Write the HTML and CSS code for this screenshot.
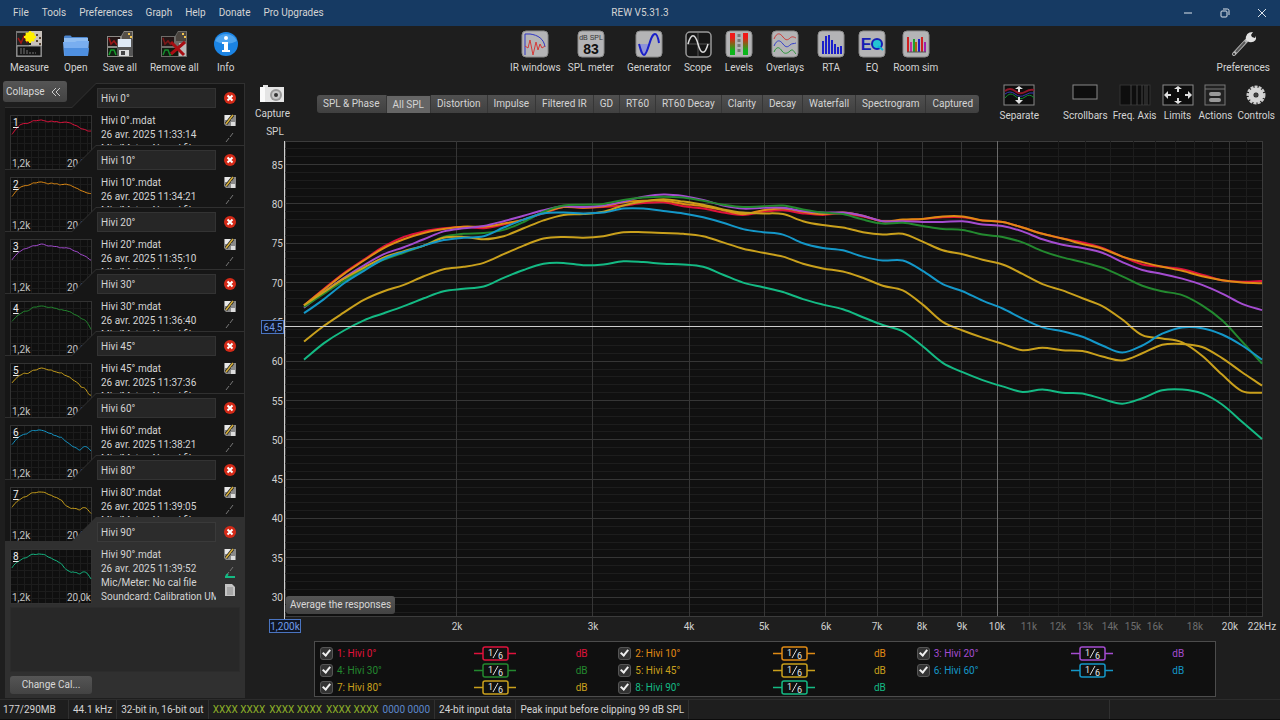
FILE: index.html
```
<!DOCTYPE html>
<html lang="en">
<head>
    <meta charset="UTF-8">
    <meta name="viewport" content="width=device-width, initial-scale=1.0">
    <title>REW V5.31.3</title>
    <link rel="stylesheet" href="styles.css">
</head>
<body>
    <!-- Title bar -->
    <header class="titlebar">
        <nav class="menu">
            <button>File</button>
            <button>Tools</button>
            <button>Preferences</button>
            <button>Graph</button>
            <button>Help</button>
            <button>Donate</button>
            <button>Pro Upgrades</button>
        </nav>
        <h1>REW V5.31.3</h1>
        <div class="window-buttons">
            <button aria-label="Minimize"><svg width="10" height="10" viewBox="0 0 10 10"><path d="M1 5h8"/></svg></button>
            <button aria-label="Restore"><svg width="10" height="10" viewBox="0 0 10 10"><rect x="1" y="3" width="6" height="6" rx="1"/><path d="M3 1h4.500q1.500 0 1.500 1.500V7"/></svg></button>
            <button aria-label="Close"><svg width="10" height="10" viewBox="0 0 10 10"><path d="M1 1l8 8M9 1l-8 8"/></svg></button>
        </div>
    </header>

    <!-- Toolbar -->
    <div class="toolbar">
        <div class="tools">
            <button class="tool">
                <svg width="28" height="28" viewBox="0 0 28 28">
                    <rect x="1" y="1" width="26" height="26" fill="#777"/>
                    <path d="M14 1h13v15H14z" fill="#c9c2bb"/>
                    <rect x="2" y="3" width="14" height="12" fill="#222"/>
                    <path d="M3 8l3 5 3-7 3 6 3-3" stroke="#a01515" stroke-width="1.500" fill="none"/>
                    <rect x="2" y="16" width="24" height="10" fill="#151515" stroke="#999"/>
                    <path d="M5 19h6M5 21h9M5 23h16" stroke="#777" stroke-dasharray="2 1"/>
                    <path d="M22 4v2M25 7v2M22 10v2M25 13v2" stroke="#543" stroke-width="2"/>
                    <circle cx="15" cy="7" r="5" fill="#fff000"/>
                    <path d="M15 1v12M9 7h12M11 3l8 8M19 3l-8 8" stroke="#fff000" stroke-width="2"/>
                </svg>
                Measure
            </button>
            <button class="tool">
                <svg width="28" height="28" viewBox="0 0 28 28">
                    <path d="M2 24V7q0-1.500 1.500-1.500h5L10 7h15q1 0 1 1.500V24z" fill="#4c86cf"/>
                    <path d="M2 8h24v4H2z" fill="#8fbdf2"/>
                    <path d="M1 12h12l2-1h12l-1 14q0 1-1 1H3q-1 0-1-1z" fill="#79aef0"/>
                    <path d="M2 18h25l-1 8H2.500z" fill="#4e8fe0"/>
                </svg>
                Open
            </button>
            <button class="tool">
                <svg width="28" height="28" viewBox="0 0 28 28">
                    <path d="M1 6h14l3-5h9v26H1z" fill="#8a8884"/>
                    <path d="M16 6l2-4h8v9H16z" fill="#555049"/>
                    <rect x="2" y="7" width="12" height="9" fill="#241616"/><rect x="2" y="18" width="12" height="8" fill="#112012"/>
                    <path d="M3 8l2 6 3-3 3 4" stroke="#9c1717" stroke-width="1.500" fill="none"/>
                    <path d="M3 25l2-5 3 0 2 5" stroke="#159a2b" stroke-width="1.500" fill="none"/>
                    <rect x="11" y="9" width="16" height="17" rx="1" fill="#565656"/>
                    <rect x="12" y="9" width="13" height="8" fill="#dfeaf6"/>
                    <rect x="13" y="20" width="10" height="6" fill="#ddd"/><rect x="15" y="21" width="4" height="4" fill="#444"/>
                    <path d="M22 4h2M24 7h2" stroke="#f0c34e" stroke-width="2"/>
                </svg>
                Save all
            </button>
            <button class="tool">
                <svg width="28" height="28" viewBox="0 0 28 28">
                    <path d="M1 6h14l3-5h9v26H1z" fill="#6e6c69"/>
                    <path d="M16 6l2-4h8v9H16z" fill="#4a443e"/>
                    <rect x="2" y="7" width="12" height="9" fill="#241616"/><rect x="2" y="18" width="16" height="8" fill="#101a10"/>
                    <path d="M3 8l2 6 3-3 3 4" stroke="#7c1717" stroke-width="1.500" fill="none"/>
                    <path d="M3 25l2-5 3 0 2 5 3-2" stroke="#158a2b" stroke-width="1.500" fill="none"/>
                    <path d="M19 13h7v13h-7z" fill="#bbb"/>
                    <path d="M11 12l13 13M25 12L11 24" stroke="#a80d12" stroke-width="3"/>
                    <path d="M22 4h2M24 7h2" stroke="#f0c34e" stroke-width="2"/>
                </svg>
                Remove all
            </button>
            <button class="tool">
                <svg width="28" height="28" viewBox="0 0 28 28">
                    <circle cx="14" cy="14" r="12" fill="#1b84e4"/>
                    <path d="M3 11a11.500 10 0 0 1 22 0q-11 6-22 0z" fill="#4da4f0"/>
                    <circle cx="14" cy="8" r="2" fill="#fff"/>
                    <path d="M10 12h6v8h2v2h-8v-2h2v-6h-2z" fill="#fff"/>
                </svg>
                Info
            </button>
        </div>

        <div class="tools tools-mid">
            <button class="tool tight">
                <svg width="28" height="28" viewBox="0 0 28 28">
                    <rect class="tile" x="1" y="1" width="26" height="26" rx="4"/>
                    <path d="M4 25V4h5c8 1 14 5 15 13" stroke="#2f35c4" fill="none"/>
                    <path d="M4 16l3 2 2-8 3 15 3-13 2 8 2-6 2 4 3-2" stroke="#d43a38" fill="none"/>
                </svg>
                IR windows
            </button>
            <button class="tool">
                <svg width="28" height="28" viewBox="0 0 28 28">
                    <rect class="tile" x="1" y="1" width="26" height="26" rx="4"/>
                    <text x="14" y="10" class="icon-small">dB SPL</text>
                    <text x="14" y="24" class="icon-big">83</text>
                </svg>
                SPL meter
            </button>
            <button class="tool">
                <svg width="28" height="28" viewBox="0 0 28 28">
                    <rect class="tile" x="1" y="1" width="26" height="26" rx="4"/>
                    <path d="M4 14h11c-2 6-4 11-6 11s-3-5-5-11z" fill="#8f93d8"/>
                    <path d="M4 14c2 7 3 11 5 11 4 0 6-21 11-21 2 0 3 3 4 9" stroke="#1a20c8" stroke-width="2" fill="none"/>
                </svg>
                Generator
            </button>
            <button class="tool">
                <svg width="28" height="28" viewBox="0 0 28 28">
                    <rect x="2" y="2" width="25" height="25" rx="4" fill="#161616" stroke="#999" stroke-width="1.500"/>
                    <path d="M14 3v23M3 14h23" stroke="#555"/>
                    <path d="M4 14c3-11 7-11 10 0s7 11 10 0" stroke="#ddd" stroke-width="1.500" fill="none"/>
                </svg>
                Scope
            </button>
            <button class="tool">
                <svg width="28" height="28" viewBox="0 0 28 28">
                    <defs>
                        <linearGradient id="meter" x2="0" y2="1"><stop offset=".2" stop-color="#f01818"/><stop offset=".8" stop-color="#0cb51c"/></linearGradient>
                    </defs>
                    <rect class="tile" x="1" y="1" width="26" height="26" rx="4"/>
                    <rect x="5" y="3" width="5" height="22" fill="url(#meter)"/><rect x="18" y="3" width="5" height="22" fill="url(#meter)"/>
                    <path d="M14 4v20" stroke="#777" stroke-width="3" stroke-dasharray="3 2"/>
                </svg>
                Levels
            </button>
            <button class="tool">
                <svg width="28" height="28" viewBox="0 0 28 28">
                    <rect class="tile" x="1" y="1" width="26" height="26" rx="4"/>
                    <g fill="none">
                        <path d="M3 9c3-7 6-6 9-2s5 3 7 1 4-1 6 0" stroke="#cf3a38"/>
                        <path d="M3 16c3-7 6-6 9-2s5 3 7 1 4-1 6-2" stroke="#3540c8"/>
                        <path d="M3 22c3-7 6-4 8-1s5 3 8 0 4 1 6 3" stroke="#2a9638"/>
                    </g>
                </svg>
                Overlays
            </button>
            <button class="tool">
                <svg width="28" height="28" viewBox="0 0 28 28">
                    <rect class="tile" x="1" y="1" width="26" height="26" rx="4"/>
                    <path d="M6 24V11M9 24V6M12 24V5M15 24V10M18 24V14M21 24V17M24 24V16" stroke="#1a1ecb" stroke-width="2"/>
                </svg>
                RTA
            </button>
            <button class="tool tight">
                <svg width="28" height="28" viewBox="0 0 28 28">
                    <rect class="tile" x="1" y="1" width="26" height="26" rx="4"/>
                    <circle cx="19" cy="14" r="5" fill="#25c5d2" stroke="#1620b4" stroke-width="2"/>
                    <path d="M20 16l5 4" stroke="#10b8d8" stroke-width="2"/>
                    <text x="8" y="20" class="icon-eq">E</text>
                </svg>
                EQ
            </button>
            <button class="tool">
                <svg width="28" height="28" viewBox="0 0 28 28">
                    <rect class="tile" x="1" y="1" width="26" height="26" rx="4"/>
                    <g stroke-width="2">
                        <path d="M6 22V7M20 22V7" stroke="#d02020"/><path d="M9 22V12" stroke="#c030a0"/>
                        <path d="M12 22V9" stroke="#1aa030"/><path d="M14 22V12" stroke="#b06010"/>
                        <path d="M17 22V9" stroke="#2020c0"/><path d="M23 22V12" stroke="#a020b0"/>
                    </g>
                    <path d="M5 22h19" stroke="#555"/>
                </svg>
                Room sim
            </button>
        </div>

        <div class="tools">
            <button class="tool">
                <svg width="28" height="28" viewBox="0 0 28 28">
                    <path d="M5 24L19 9" stroke="#b5b5b5" stroke-width="4" stroke-linecap="round"/>
                    <path d="M7 22L16 12" stroke="#555" stroke-width="2"/>
                    <path d="M17 10q-1-8 7-8l-2 3 1 2 3 1 1-2q1 7-7 6z" fill="#e2e2e2"/>
                    <circle cx="5" cy="24" r="1" fill="#222"/>
                </svg>
                Preferences
            </button>
        </div>
    </div>

    <div class="workspace">
        <!-- Measurement list -->
        <aside class="sidebar">
            <button class="grey-button collapse">Collapse
                <svg width="10" height="10" viewBox="0 0 10 10"><path d="M5 1L1 5l4 4M9 1L5 5l4 4"/></svg>
            </button>
            <ul class="cards" id="cards"></ul>
            <div class="cal-panel">
                <div class="notes"></div>
                <button class="grey-button change-cal">Change Cal...</button>
            </div>
        </aside>

        <main class="main">
            <div class="graph-bar">
                <button class="tool capture">
                    <svg width="26" height="20" viewBox="0 0 26 20">
                        <path d="M1 3h3V1h5v2h16v15H1z" fill="#e4e4e4"/>
                        <path d="M1 3h5v15H1z" fill="#fafafa"/>
                        <circle cx="17" cy="11" r="6" fill="#999"/><circle cx="17" cy="11" r="4" fill="#c9c9c9"/><circle cx="17" cy="11" r="2" fill="#333"/>
                    </svg>
                    Capture
                </button>
                <div class="tabs">
                    <button>SPL &amp; Phase</button>
                    <button class="active">All SPL</button>
                    <button>Distortion</button>
                    <button>Impulse</button>
                    <button>Filtered IR</button>
                    <button>GD</button>
                    <button>RT60</button>
                    <button>RT60 Decay</button>
                    <button>Clarity</button>
                    <button>Decay</button>
                    <button>Waterfall</button>
                    <button>Spectrogram</button>
                    <button>Captured</button>
                </div>
                <button class="tool separate">
                    <svg width="32" height="22" viewBox="0 0 32 22">
                        <rect class="panel" x="1" y="1" width="30" height="20"/>
                        <path d="M2 7q5-4 10 0t10 1 9-2" stroke="#901828" stroke-width="2" fill="none"/>
                        <path d="M2 10q5-4 10 0t10 1 9-2" stroke="#3438b0" fill="none"/>
                        <path d="M2 14q5-7 10-2t10 1 9 1" stroke="#128a2c" fill="none"/>
                        <path class="arrow" d="M15 8V5h-3l4-3 4 3h-3v3zM15 13v3h-3l4 4 4-4h-3v-3z"/>
                    </svg>
                    Separate
                </button>
                <div class="graph-tools">
                    <button class="tool">
                        <svg width="32" height="22" viewBox="0 0 32 22"><rect class="panel" x="4" y="1" width="24" height="14"/></svg>
                        Scrollbars
                    </button>
                    <button class="tool">
                        <svg width="32" height="22" viewBox="0 0 32 22">
                            <rect x="1" y="1" width="30" height="20" fill="#0e0e0e" stroke="#333"/>
                            <path d="M12 1v20M18 1v20M23 1v20M26 1v20M28 1v20" stroke="#444"/>
                        </svg>
                        Freq. Axis
                    </button>
                    <button class="tool">
                        <svg width="32" height="22" viewBox="0 0 32 22">
                            <rect class="panel" x="1" y="1" width="30" height="20"/>
                            <path class="arrow" d="M15 8V5h-3l4-3 4 3h-3v3zM15 14v3h-3l4 3 4-3h-3v-3zM9 10H6V7l-4 4 4 4v-3h3zM23 10h3V7l4 4-4 4v-3h-3z"/>
                        </svg>
                        Limits
                    </button>
                    <button class="tool">
                        <svg width="32" height="22" viewBox="0 0 32 22">
                            <rect x="6" y="1" width="20" height="20" fill="#222" stroke="#777"/>
                            <path d="M6 5h20" stroke="#777"/>
                            <path d="M12 10h8M12 16h8" stroke="#9a9a9a" stroke-width="4" stroke-linecap="round"/>
                        </svg>
                        Actions
                    </button>
                    <button class="tool">
                        <svg width="32" height="22" viewBox="0 0 32 22">
                            <circle cx="16" cy="11" r="8" fill="none" stroke="#ccc" stroke-width="3" stroke-dasharray="3 1"/>
                            <circle cx="16" cy="11" r="5" fill="none" stroke="#d6d6d6" stroke-width="5"/>
                            <circle cx="16" cy="11" r="2" fill="#444"/>
                        </svg>
                        Controls
                    </button>
                </div>
            </div>

            <div class="graph">
                <svg id="chart" role="img" aria-label="All SPL"></svg>
                <button class="grey-button average">Average the responses</button>
            </div>

            <div class="legend" id="legend"></div>
        </main>
    </div>

    <footer class="status">
        <span class="memory">177/290MB</span>
        <span>44.1 kHz</span>
        <span>32-bit in, 16-bit out</span>
        <span class="bits"><i>XXXX XXXX</i><i>XXXX XXXX</i><i>XXXX XXXX</i><b>0000 0000</b></span>
        <span>24-bit input data</span>
        <span>Peak input before clipping 99 dB SPL</span>
        <span class="fill"></span>
        <span class="last"></span>
    </footer>

    <script src="script.js"></script>
</body>
</html>
```

FILE: styles.css
```
* {
    box-sizing: border-box;
}

body {
    margin: 0;
    height: 100vh;
    display: flex;
    flex-direction: column;
    overflow: hidden;
    background: #1e1e1e;
    color: #d4d4d4;
    font-family: Roboto, "Noto Sans", sans-serif;
    font-size: 10px;
    line-height: 14px;
}

button {
    margin: 0;
    padding: 0;
    border: none;
    background: none;
    color: inherit;
    font: inherit;
    white-space: nowrap;
}

svg {
    display: block;
}

/* Title bar */
.titlebar {
    display: grid;
    grid-template-columns: 1fr auto 1fr;
    align-items: center;
    height: 26px;
    background: #163a63;
}

.titlebar h1 {
    margin: 0;
    font-size: 10px;
    font-weight: normal;
}

.menu {
    display: flex;
    gap: 13px;
    padding-left: 13px;
}

.window-buttons {
    display: flex;
    justify-content: flex-end;
    gap: 27px;
    padding-right: 13px;
}

.window-buttons svg {
    fill: none;
    stroke: #dde4ec;
}

/* Toolbar */
.toolbar {
    display: flex;
    justify-content: space-between;
    height: 55px;
    padding: 4px 10px 0 10px;
}

.tools {
    display: flex;
    align-items: flex-start;
    gap: 13px;
}

.tools-mid {
    margin-right: 8px;
}

.tool {
    display: flex;
    flex-direction: column;
    align-items: center;
    gap: 3px;
}

.tool.tight {
    margin-right: -6px;
}

.tile {
    fill: #b4b4b6;
    stroke: #8b8b8b;
}

.icon-small, .icon-big, .icon-eq {
    font-family: "Liberation Sans", sans-serif;
    text-anchor: middle;
}

.icon-small {
    font-size: 7px;
    fill: #333;
}

.icon-big {
    font-size: 14px;
    font-weight: bold;
    fill: #111;
}

.icon-eq {
    font-size: 16px;
    font-weight: bold;
    fill: #1620b4;
}

.grey-button {
    background: linear-gradient(#555, #434343);
    border-radius: 3px;
    color: #d8d8d8;
}

/* Sidebar */
.workspace {
    flex: 1;
    min-height: 0;
    display: flex;
}

.sidebar {
    flex: none;
    width: 245px;
    display: flex;
    flex-direction: column;
    padding-left: 5px;
}

.collapse {
    position: relative;
    z-index: 1;
    align-self: flex-start;
    display: flex;
    align-items: center;
    gap: 6px;
    height: 21px;
    margin-left: -2px;
    padding: 0 6px 0 3px;
}

.collapse svg {
    fill: none;
    stroke: #ccc;
}

.cards {
    list-style: none;
    margin: -19px 0 0;
    padding: 0;
}

.card, .card-body {
    clip-path: polygon(0 24px, 67px 24px, 91px 0, 100% 0, 100% 100%, 0 100%);
}

.card {
    height: 87px;
    margin-bottom: -25px;
    padding: 1px 1px 0 0;
    background: #303030;
}

.card:last-child {
    margin-bottom: 0;
}

.card-body {
    display: flex;
    height: 86px;
    padding: 4px 0 0 5px;
    background: #161616;
}

.card.selected .card-body {
    background: #303030;
}

.thumb {
    flex: none;
    align-self: flex-start;
    margin-top: 27px;
    background: #0f0f0f;
}

.thumb text {
    font-size: 10px;
    fill: #c4c4c4;
}

.thumb .number {
    text-decoration: underline;
    fill: #eee;
}

.card-info {
    flex: 1;
    min-width: 0;
    margin-left: 5px;
}

.card-info input {
    display: block;
    width: 100%;
    height: 20px;
    padding: 0 3px;
    border: 1px solid #333;
    background: #262626;
    color: #d4d4d4;
    font: inherit;
}

.card.selected input {
    background: #2c2c2c;
    border-color: #3a3a3a;
}

.card-info p {
    margin: 6px 0 0 4px;
    line-height: 14px;
    white-space: pre;
    overflow: hidden;
}

.card-actions {
    flex: none;
    display: flex;
    flex-direction: column;
    align-items: center;
    gap: 5px;
    width: 28px;
    padding-top: 4px;
}

.card-actions .remove {
    margin-bottom: 4px;
}

.cal-panel {
    flex: 1;
    display: flex;
    flex-direction: column;
    align-items: flex-start;
    gap: 4px;
    margin-bottom: 1px;
    padding: 3px 5px 4px;
    background: #303030;
}

.notes {
    flex: 1;
    width: 100%;
    background: #282828;
    border: 1px solid #2c2c2c;
}

.change-cal {
    height: 18px;
    width: 82px;
}

/* Graph area */
.main {
    flex: 1;
    min-width: 0;
    display: flex;
    flex-direction: column;
}

.graph-bar {
    display: flex;
    align-items: flex-start;
    height: 44px;
    padding: 3px 5px 0 10px;
}

.tabs {
    display: flex;
    margin: 11px auto 0 27px;
    border-radius: 3px;
    background: linear-gradient(#505050, #404040);
}

.tabs button {
    height: 18px;
    padding: 0 6px;
    border-right: 1px solid #363636;
}

.tabs button:last-child {
    border-right: none;
}

.tabs .active {
    background: #656565;
    border-top: 1px solid #222;
}

.separate {
    margin-right: 24px;
}

.graph-tools {
    display: flex;
    gap: 5px;
}

.panel {
    fill: #0e0e0e;
    stroke: #888;
}

.arrow {
    fill: #e0e0e0;
}

.graph {
    flex: 1;
    min-height: 0;
    position: relative;
}

#chart {
    width: 100%;
    height: 100%;
}

#chart text {
    font-size: 10px;
    fill: #d0d0d0;
    text-anchor: middle;
}

#chart .axis-y {
    text-anchor: end;
}

#chart .dim {
    fill: #6e6e6e;
}

#chart .cursor-text {
    fill: #6f9be8;
}

.cursor-box {
    fill: #101522;
    stroke: #4a74c0;
}

.plot-back {
    fill: #101010;
    stroke: #3c3c3c;
}

.minor {
    stroke: #1d1d1d;
}

.major {
    stroke: #363636;
}

.decade {
    stroke: #6a6a6a;
}

.cursor {
    stroke: #cfcfcf;
}

.curve {
    fill: none;
    stroke-width: 2;
}

/* Sits over the bottom left corner of the plot */
.average {
    position: absolute;
    left: 41px;
    bottom: 27px;
    height: 18px;
    padding: 0 4px;
}

.legend {
    display: grid;
    grid-template-columns: repeat(3, 1fr);
    height: 56px;
    margin: 0 64px 2px 69px;
    padding: 3px 0 0 5px;
    border: 1px solid #4c4c4c;
    background: #101010;
}

.legend-item {
    display: grid;
    grid-template-columns: 17px 46% 34% 1fr;
    align-items: center;
    height: 17px;
}

.legend-item input {
    appearance: none;
    width: 13px;
    height: 13px;
    margin: 0;
    border: 1px solid #555;
    border-radius: 3px;
    background: #333;
}

.legend-item input:checked::before {
    content: "";
    display: block;
    box-sizing: content-box;
    width: 3px;
    height: 6px;
    margin-left: 3px;
    border: solid #eee;
    border-width: 0 2px 2px 0;
    transform: rotate(40deg);
}

.smooth text {
    fill: #e8e8e8;
    font-size: 9px;
}

/* Status bar */
.status {
    display: flex;
    height: 21px;
    border-top: 1px solid #2c2c2c;
    border-bottom: 1px solid #0c0c0c;
}

.status span {
    padding: 3px 4px 0;
    border-right: 1px solid #303030;
    white-space: nowrap;
}

.status .memory {
    width: 69px;
    padding-left: 3px;
}

.status .bits {
    display: flex;
    gap: 4px;
}

.bits i {
    font-style: normal;
    color: #8cae28;
}

.bits b {
    font-weight: normal;
    color: #5c87cc;
}

.status .fill {
    flex: 1;
}

.status .last {
    width: 170px;
    border: none;
}
```

FILE: script.js
```
// SPL in dB, log spaced from F_START to F_END
const F_START = 1270;
const F_END = 22000;

const measurements = [
    { name: 'Hivi 0°', time: '11:33:14', color: '#e0123c', spl: [67.1, 69.2, 71.2, 72.9, 74.6, 75.8, 76.5, 76.9, 77.1, 76.9, 77.4, 78.0, 78.8, 79.6, 79.5, 79.6, 79.8, 80.1, 80.2, 79.7, 79.4, 78.9, 78.6, 79.0, 79.2, 78.8, 78.6, 78.8, 78.4, 77.8, 77.9, 78.1, 78.3, 78.3, 77.9, 77.7, 77.0, 76.2, 75.6, 75.1, 74.4, 73.3, 72.3, 72.0, 71.7, 71.0, 70.3, 70.1, 70.2] },
    { name: 'Hivi 10°', time: '11:34:21', color: '#e08a14', spl: [67.1, 69.1, 71.1, 72.8, 74.4, 75.5, 76.3, 76.8, 77.1, 77.1, 77.5, 78.0, 78.9, 79.6, 79.5, 79.7, 80.2, 80.4, 80.4, 80.0, 79.7, 79.2, 78.7, 79.2, 79.4, 79.0, 78.7, 78.9, 78.5, 77.8, 78.0, 78.1, 78.4, 78.4, 77.9, 77.7, 77.0, 76.2, 75.6, 74.9, 74.3, 73.3, 72.6, 72.0, 71.5, 70.8, 70.3, 70.0, 69.9] },
    { name: 'Hivi 20°', time: '11:35:10', color: '#a44cd0', spl: [66.8, 68.8, 70.6, 72.2, 73.6, 74.5, 75.5, 76.5, 76.9, 77.2, 77.8, 78.5, 79.2, 79.7, 79.6, 79.8, 80.3, 80.9, 81.2, 81.0, 80.5, 79.8, 79.4, 79.5, 79.5, 79.1, 78.9, 78.9, 78.5, 77.8, 77.8, 77.7, 77.7, 77.8, 77.4, 77.2, 76.5, 75.5, 74.8, 74.4, 73.8, 72.6, 71.6, 71.1, 70.5, 69.7, 68.6, 67.3, 66.5] },
    { name: 'Hivi 30°', time: '11:36:40', color: '#23892f', spl: [66.9, 68.6, 70.2, 71.7, 72.9, 73.8, 74.7, 75.8, 76.2, 76.3, 76.7, 77.7, 79.0, 79.8, 79.9, 80.0, 80.5, 80.8, 80.9, 80.8, 80.4, 79.9, 79.6, 79.7, 79.8, 79.3, 78.9, 78.7, 78.0, 77.5, 77.6, 77.2, 76.8, 76.7, 76.1, 75.8, 75.1, 74.0, 73.2, 72.6, 71.9, 70.8, 69.6, 68.9, 68.4, 67.1, 65.2, 62.5, 59.7] },
    { name: 'Hivi 45°', time: '11:37:36', color: '#c9a01c', spl: [67.1, 68.8, 70.5, 71.9, 73.2, 74.0, 74.7, 75.7, 75.8, 75.5, 75.9, 76.9, 77.9, 78.6, 78.7, 79.0, 79.8, 80.3, 80.6, 80.3, 79.9, 79.3, 78.9, 78.8, 78.7, 77.8, 77.3, 77.0, 76.4, 76.1, 76.2, 75.2, 74.1, 73.6, 72.9, 72.3, 71.1, 69.8, 69.0, 68.0, 67.0, 65.3, 63.3, 62.9, 62.4, 60.7, 58.3, 56.2, 56.0] },
    { name: 'Hivi 60°', time: '11:38:21', color: '#1497c8', spl: [66.1, 67.9, 69.9, 71.5, 73.0, 73.9, 74.7, 75.4, 75.7, 75.9, 77.0, 78.0, 78.8, 78.9, 78.8, 78.9, 79.4, 79.4, 79.1, 78.8, 78.3, 77.6, 76.8, 76.4, 76.1, 75.0, 74.4, 74.1, 73.3, 72.8, 72.8, 71.5, 69.8, 68.9, 67.7, 66.7, 65.4, 64.3, 63.8, 63.1, 62.0, 61.1, 62.0, 63.5, 64.3, 64.2, 63.4, 62.0, 60.2] },
    { name: 'Hivi 80°', time: '11:39:05', color: '#c9a01c', spl: [62.5, 64.5, 66.2, 67.8, 68.9, 69.7, 70.8, 71.7, 72.0, 72.5, 73.6, 74.7, 75.6, 75.8, 75.7, 75.9, 76.4, 76.4, 76.3, 76.2, 75.9, 75.1, 74.3, 73.8, 73.3, 72.4, 71.8, 71.4, 70.6, 69.6, 69.0, 67.2, 65.0, 63.9, 63.0, 62.2, 61.4, 61.7, 61.4, 61.3, 60.6, 60.1, 61.0, 62.1, 62.2, 61.8, 60.4, 58.6, 56.9] },
    { name: 'Hivi 90°', time: '11:39:52', color: '#14ba84', spl: [60.2, 62.3, 63.9, 65.2, 66.1, 67.0, 68.0, 68.9, 69.2, 69.5, 70.6, 71.6, 72.4, 72.5, 72.2, 72.3, 72.7, 72.6, 72.4, 72.3, 72.0, 71.0, 70.0, 69.4, 68.8, 67.9, 67.2, 66.6, 65.6, 64.6, 63.8, 61.9, 59.8, 58.6, 57.6, 56.8, 56.1, 56.4, 56.0, 55.9, 55.2, 54.6, 55.3, 56.3, 56.4, 55.9, 54.5, 52.3, 50.1] }
];

function freqAt(i, count) {
    return F_START * Math.pow(F_END / F_START, i / (count - 1));
}

// smooth path through all points
function smoothPath(pts) {
    let d = `M${pts[0][0].toFixed(1)} ${pts[0][1].toFixed(1)}`;
    for (let i = 0; i < pts.length - 1; i++) {
        const p0 = pts[i - 1] || pts[i];
        const p1 = pts[i];
        const p2 = pts[i + 1];
        const p3 = pts[i + 2] || p2;
        const c = [
            p1[0] + (p2[0] - p0[0]) / 6, p1[1] + (p2[1] - p0[1]) / 6,
            p2[0] - (p3[0] - p1[0]) / 6, p2[1] - (p3[1] - p1[1]) / 6,
            p2[0], p2[1]
        ].map(v => v.toFixed(1));
        d += `C${c.join(' ')}`;
    }
    return d;
}

function line(cls, x1, y1, x2, y2) {
    return `<line class="${cls}" x1="${x1}" y1="${y1}" x2="${x2}" y2="${y2}"/>`;
}

function drawChart() {
    const svg = document.getElementById('chart');
    const w = svg.clientWidth;
    const h = svg.clientHeight;
    const left = 40, top = 16, right = w - 18, bottom = h - 25;
    const x = f => left + (right - left) * Math.log(f / 1200) / Math.log(22000 / 1200);
    const y = db => top + (bottom - top) * (88 - db) / 60.4;
    const snap = v => Math.floor(v) + 0.5;
    let out = `<rect class="plot-back" x="${left + 0.5}" y="${top + 0.5}" width="${right - left}" height="${bottom - top}"/>`;

    for (let db = 28; db < 88; db++) {
        if (db % 5) out += line('minor', left, snap(y(db)), right, snap(y(db)));
    }
    for (let k = 11; k <= 21; k++) {
        if (k !== 20) out += line('minor', snap(x(k * 1000)), top, snap(x(k * 1000)), bottom);
    }
    for (let db = 30; db <= 85; db += 5) {
        out += line('major', left, snap(y(db)), right, snap(y(db)));
        out += `<text class="axis-y" x="${left - 2}" y="${Math.round(y(db)) + 4}">${db}</text>`;
    }
    [2, 3, 4, 5, 6, 7, 8, 9, 10, 20].forEach(k => {
        out += line(k === 10 ? 'decade' : 'major', snap(x(k * 1000)), top, snap(x(k * 1000)), bottom);
    });
    [2, 3, 4, 5, 6, 7, 8, 9, 10, 11, 12, 13, 14, 15, 16, 18, 20].forEach(k => {
        const cls = k > 10 && k < 20 ? 'dim' : '';
        out += `<text class="${cls}" x="${Math.round(x(k * 1000))}" y="${h - 11}">${k}k</text>`;
    });
    out += `<text x="${right}" y="${h - 11}">22kHz</text>`;
    out += `<text x="${left - 10}" y="10">SPL</text>`;

    measurements.forEach(m => {
        const pts = m.spl.map((v, i) => [x(freqAt(i, m.spl.length)), y(v)]);
        out += `<path class="curve" stroke="${m.color}" d="${smoothPath(pts)}"/>`;
    });

    // cursor lines with their values
    const cy = Math.ceil(y(64.5));
    out += line('cursor', left, cy + 0.5, right, cy + 0.5);
    out += line('cursor', left - 0.5, top, left - 0.5, bottom + 3);
    out += `<rect class="cursor-box" x="16.5" y="${cy - 5.5}" width="22" height="13"/>`;
    out += `<text class="cursor-text" x="28" y="${cy + 5}">64,5</text>`;
    out += `<rect class="cursor-box" x="24.5" y="${h - 21.5}" width="31" height="13"/>`;
    out += `<text class="cursor-text" x="40" y="${h - 11}">1,200k</text>`;
    svg.innerHTML = out;
}

function thumb(m, n) {
    const peak = Math.max(...m.spl);
    const pts = m.spl.map((v, i) => [2 + i * 79 / 48, 5 + (peak - v) * 1.1]);
    let grid = '';
    for (let i = 1; i < 12; i++) grid += `<path d="M${i * 7}.5 1v54"/>`;
    for (let i = 1; i < 8; i++) grid += `<path d="M1 ${i * 7}.5h80"/>`;
    return `<svg class="thumb" width="82" height="55" viewBox="0 0 82 55">
        <g stroke="#1c1c1c">${grid}</g>
        <rect x="0.5" y="0.5" width="81" height="54" fill="none" stroke="#333"/>
        <path d="${smoothPath(pts)}" fill="none" stroke="${m.color}"/>
        <text class="number" x="3" y="11">${n}</text>
        <text x="2" y="52">1,2k</text>
        <text x="57" y="52">20,0k</text>
    </svg>`;
}

function card(m, n) {
    const selected = n === measurements.length;
    return `<li class="card${selected ? ' selected' : ''}">
        <div class="card-body">
            ${thumb(m, n)}
            <div class="card-info">
                <input type="text" value="${m.name}" aria-label="Measurement ${n} name">
                <p>${m.name}.mdat\n26 avr. 2025 ${m.time}\nMic/Meter: No cal file\nSoundcard: Calibration UMIK</p>
            </div>
            <div class="card-actions">
                <button class="remove" aria-label="Remove">
                    <svg width="12" height="12" viewBox="0 0 12 12"><circle cx="6" cy="6" r="6" fill="#d42a18"/><path d="M3.500 3.500l5 5M8.500 3.500l-5 5" stroke="#fff" stroke-width="2"/></svg>
                </button>
                <button aria-label="Save">
                    <svg width="14" height="14" viewBox="0 0 14 14"><path d="M1 2h12v11H3l-2-2z" fill="#8a8a8a"/><path d="M2 2h7v5H2z" fill="#e8e8e8"/><path d="M8 9h4v4H8z" fill="#ddd"/><path d="M3 11L10 2" stroke="#222" stroke-width="3"/><path d="M3 11l7-9" stroke="#d8b03a" stroke-width="1.500"/></svg>
                </button>
                <svg width="14" height="12" viewBox="0 0 14 12"><path d="M3 10l3-4M7 5l3-4" stroke="#777"/>${selected ? `<path d="M2 11h10M3 10l2-2" stroke="${m.color}" stroke-width="2"/>` : ''}</svg>
                <svg width="12" height="13" viewBox="0 0 12 13"><path d="M1 1h7l3 3v9H1z" fill="#c4c4c4"/><path d="M3 5h6M3 7h6M3 9h6M3 11h6" stroke="#888"/></svg>
            </div>
        </div>
    </li>`;
}

function legendItem(m, n) {
    return `<div class="legend-item" style="color: ${m.color}">
        <input type="checkbox" id="trace${n}" checked>
        <label for="trace${n}">${n}: ${m.name}</label>
        <svg class="smooth" width="42" height="17" viewBox="0 0 42 17">
            <path d="M0 8.500h9M34 8.500h8" stroke="${m.color}" stroke-width="1.500"/>
            <rect x="9" y="2" width="25" height="13" rx="2" fill="none" stroke="${m.color}" stroke-width="1.500"/>
            <text x="14" y="11">1</text><path d="M19 13l5-9" stroke="#ddd"/><text x="24" y="14">6</text>
        </svg>
        <span>dB</span>
    </div>`;
}

document.getElementById('cards').innerHTML = measurements.map((m, i) => card(m, i + 1)).join('');
document.getElementById('legend').innerHTML = measurements.map((m, i) => legendItem(m, i + 1)).join('');

drawChart();
window.addEventListener('resize', drawChart);
```
